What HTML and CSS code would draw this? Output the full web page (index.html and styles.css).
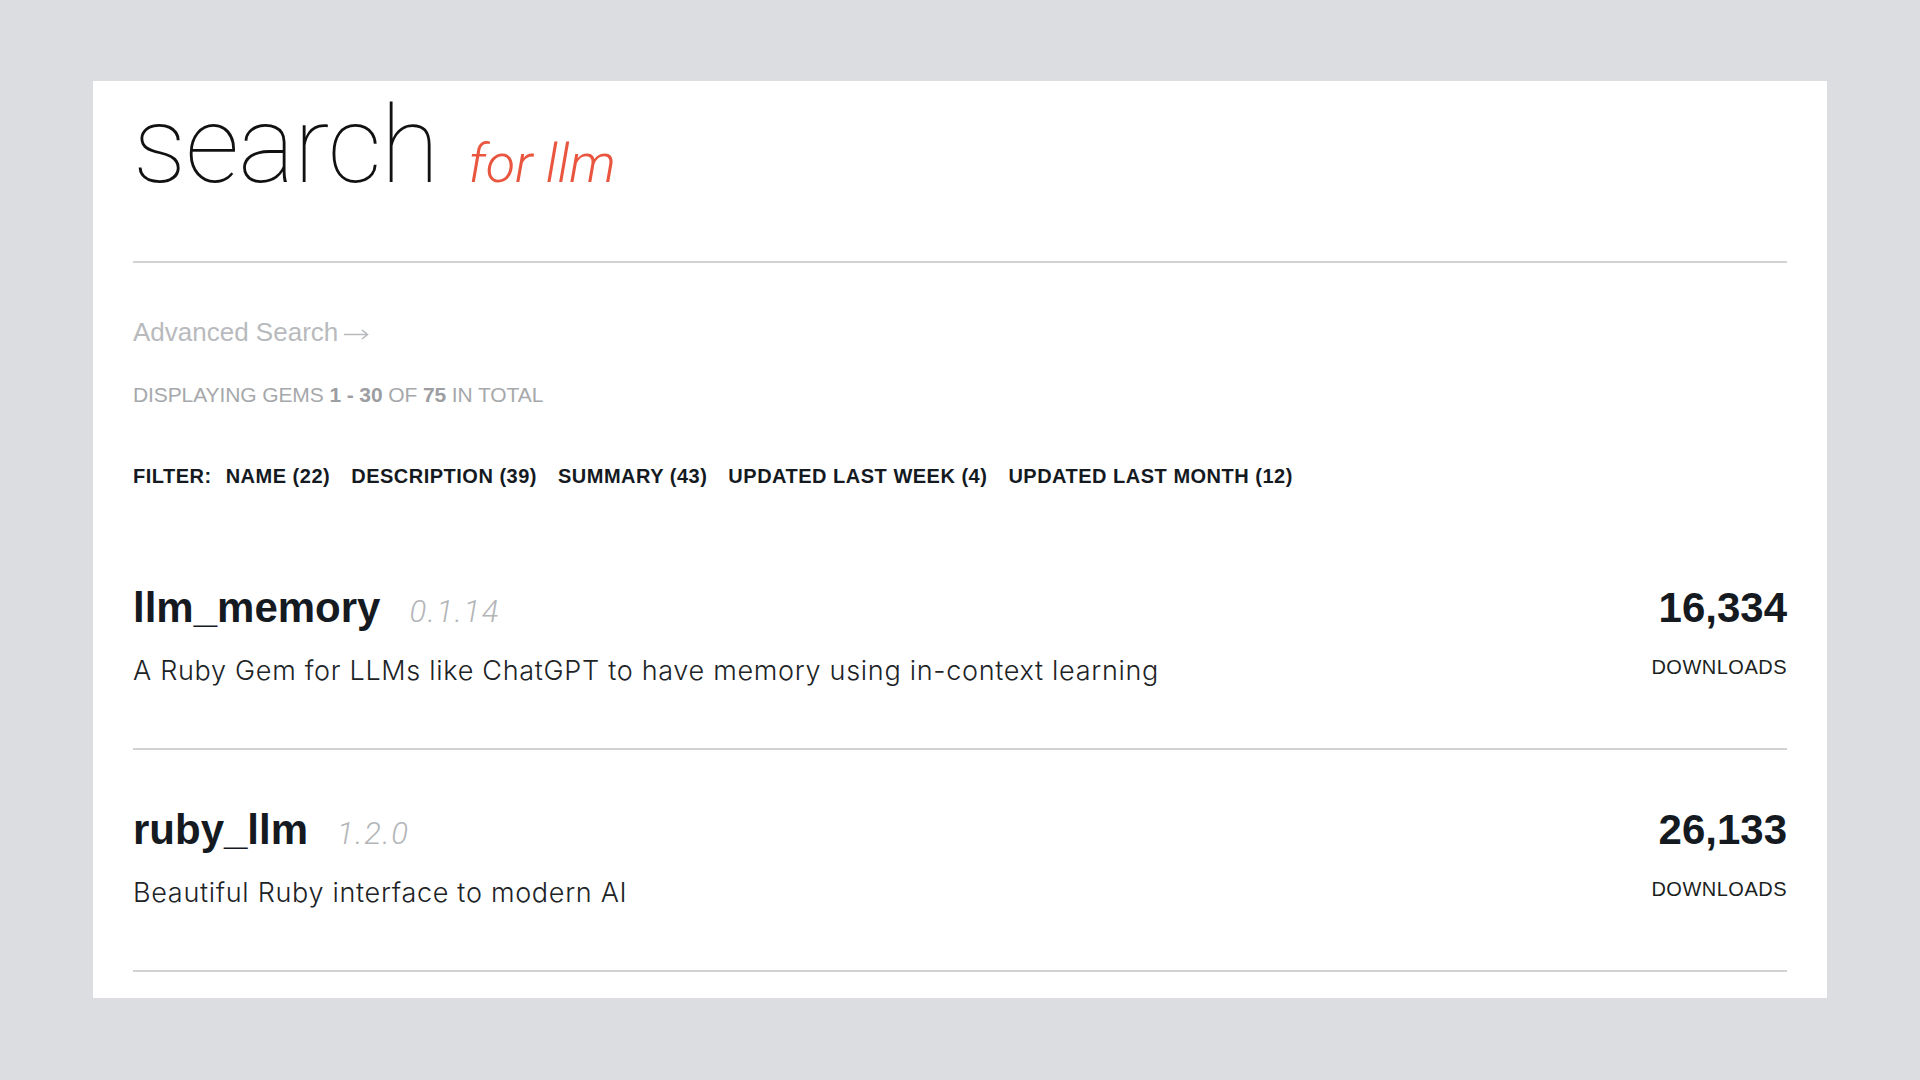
FILE: index.html
```html
<!DOCTYPE html>
<html lang="en">
<head>
<meta charset="utf-8">
<title>search for llm</title>
<link rel="stylesheet" href="styles.css">
</head>
<body>
<main class="card">
  <header class="page-head">
    <h1 class="title">search</h1>
    <span class="subtitle">for llm</span>
  </header>
  <div class="meta">
    <a class="advanced" href="#">Advanced Search<svg class="arrow" width="26" height="12" viewBox="0 0 26 12" aria-hidden="true"><path d="M1 6.5 H24 M19 2 L24.5 6.5 L19 11" fill="none" stroke="currentColor" stroke-width="1.6"/></svg></a>
    <p class="count">DISPLAYING GEMS <b>1 - 30</b> OF <b>75</b> IN TOTAL</p>
    <nav class="filters">
      <span class="filter-label">FILTER:</span>
      <a href="#" class="filter">NAME (22)</a>
      <a href="#" class="filter">DESCRIPTION (39)</a>
      <a href="#" class="filter">SUMMARY (43)</a>
      <a href="#" class="filter">UPDATED LAST WEEK (4)</a>
      <a href="#" class="filter">UPDATED LAST MONTH (12)</a>
    </nav>
  </div>
  <ul class="gems">
    <li class="gem">
      <div class="gem-main">
        <div class="gem-head"><span class="gem-name">llm_memory</span><span class="gem-version">0.1.14</span></div>
        <p class="gem-desc">A Ruby Gem for LLMs like ChatGPT to have memory using in-context learning</p>
      </div>
      <div class="gem-stats">
        <span class="gem-downloads">16,334</span>
        <span class="gem-dl-label">DOWNLOADS</span>
      </div>
    </li>
    <li class="gem">
      <div class="gem-main">
        <div class="gem-head"><span class="gem-name">ruby_llm</span><span class="gem-version">1.2.0</span></div>
        <p class="gem-desc">Beautiful Ruby interface to modern AI</p>
      </div>
      <div class="gem-stats">
        <span class="gem-downloads">26,133</span>
        <span class="gem-dl-label">DOWNLOADS</span>
      </div>
    </li>
  </ul>
</main>
</body>
</html>
```
FILE: styles.css
```css
* { box-sizing: border-box; }
html, body { margin: 0; padding: 0; }
body {
  background: #dcdde0;
  font-family: "Liberation Sans", Arial, sans-serif;
  padding: 81px 93px 82px;
  height: 1080px;
  overflow: hidden;
}
.card {
  background: #ffffff;
  padding: 0 40px 27px;
  height: 917px;
}
.page-head {
  display: flex;
  align-items: baseline;
  gap: 30px;
  padding-top: 10px;
  padding-bottom: 60px;
  border-bottom: 2px solid #d2d2d2;
}
.title {
  margin: 0;
  font-family: Roboto, sans-serif;
  font-weight: 100;
  font-size: 107px;
  line-height: 110px;
  color: #111111;
  letter-spacing: -1px;
}
.subtitle {
  font-family: Roboto, sans-serif;
  font-weight: 300;
  font-style: italic;
  font-size: 54px;
  color: #e9553f;
}
.meta {
  display: flex;
  flex-direction: column;
  align-items: flex-start;
  padding-top: 54px;
  padding-bottom: 40px;
}
.advanced {
  display: inline-flex;
  align-items: center;
  gap: 5px;
  font-size: 26px;
  line-height: 30px;
  color: #b8babd;
  text-decoration: none;
}
.arrow { display: block; margin-top: 3px; }
.count {
  margin: 36px 0 0;
  font-size: 21px;
  line-height: 24px;
  color: #a6a8ab;
  letter-spacing: -0.1px;
}
.count b { color: #9c9ea2; }
.filters {
  margin-top: 57px;
  display: flex;
  gap: 21px;
  font-size: 20px;
  line-height: 24px;
  font-weight: 700;
  letter-spacing: 0.5px;
}
.filter-label { color: #141a1f; margin-right: -7px; }
.filter { color: #141a1f; text-decoration: none; }
.gems { list-style: none; margin: 0; padding: 0; }
.gem {
  display: flex;
  justify-content: space-between;
  align-items: flex-start;
  padding: 56px 0 59px;
  border-bottom: 2px solid #d2d2d2;
}
.gem-head {
  display: flex;
  align-items: baseline;
  gap: 29px;
  height: 48px;
}
.gem-name {
  font-size: 42px;
  line-height: 48px;
  font-weight: 700;
  color: #141a1f;
}
.gem-version {
  font-family: Roboto, sans-serif;
  font-weight: 300;
  font-style: italic;
  font-size: 31px;
  letter-spacing: 1.6px;
  color: #b3b5b8;
}
.gem-desc {
  margin: 21px 0 0;
  font-family: Inter, Roboto, sans-serif;
  font-weight: 300;
  font-size: 27px;
  line-height: 36px;
  color: #202326;
  letter-spacing: 0.7px;
}
.gem-stats {
  display: flex;
  flex-direction: column;
  align-items: flex-end;
}
.gem-downloads {
  font-size: 42px;
  line-height: 48px;
  font-weight: 700;
  color: #141a1f;
}
.gem-dl-label {
  margin-top: 23px;
  font-size: 20px;
  line-height: 24px;
  color: #1c1f22;
  letter-spacing: 0.5px;
}
```
